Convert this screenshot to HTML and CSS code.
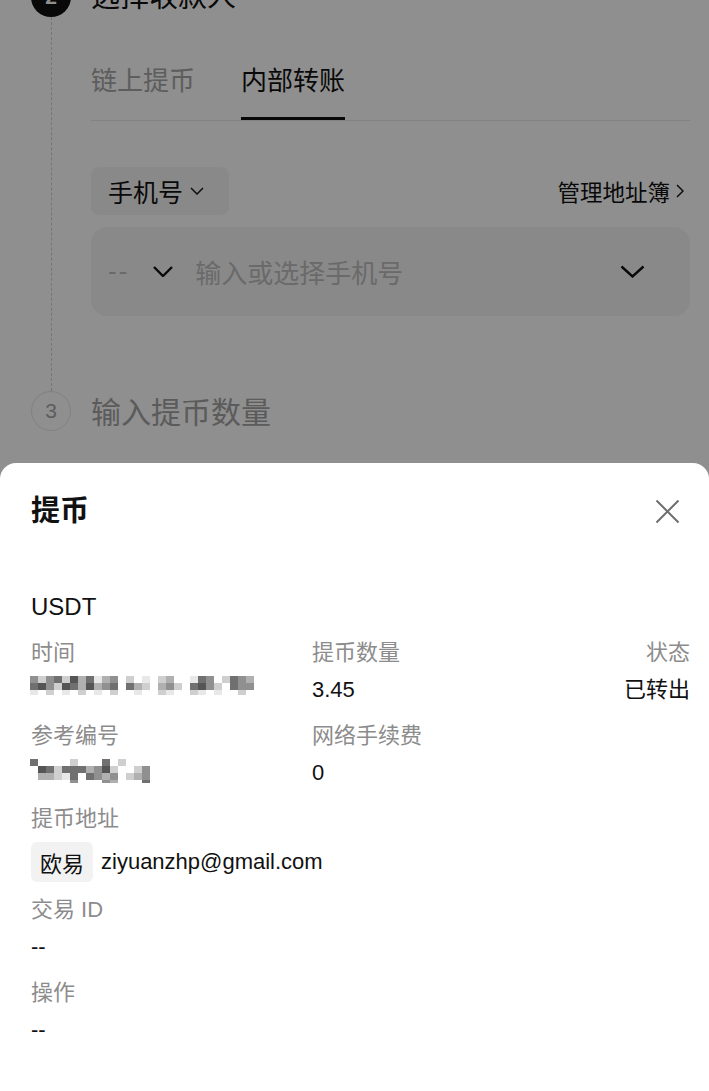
FILE: index.html
```html
<!DOCTYPE html>
<html lang="zh-CN">
<head>
<meta charset="utf-8">
<title>提币</title>
<link rel="stylesheet" href="styles.css">
</head>
<body>
<div class="page">
  <section class="step">
    <div class="step-head">
      <span class="step-num step-num-active">2</span>
      <span class="step-title">选择收款人</span>
    </div>
    <div class="step-body">
      <div class="tabs">
        <span class="tab">链上提币</span>
        <span class="tab tab-active">内部转账</span>
      </div>
      <div class="type-row">
        <span class="pill">手机号
          <svg class="ico-chev-sm" width="14" height="8" viewBox="0 0 14 8"><path d="M1 1 L7 7 L13 1" fill="none" stroke="#1a1a1a" stroke-width="1.5"/></svg>
        </span>
        <span class="book">管理地址簿
          <svg class="ico-chev-r" width="8" height="14" viewBox="0 0 8 14"><path d="M1 1 L7 7 L1 13" fill="none" stroke="#1a1a1a" stroke-width="1.5"/></svg>
        </span>
      </div>
      <div class="input">
        <span class="code">--</span>
        <svg class="ico-chev-code" width="20" height="11" viewBox="0 0 20 11"><path d="M1 1 L10 10 L19 1" fill="none" stroke="#111" stroke-width="2.4"/></svg>
        <span class="placeholder">输入或选择手机号</span>
        <svg class="ico-chev-end" width="25" height="13" viewBox="0 0 25 13"><path d="M1.5 1.5 L12.5 11.5 L23.5 1.5" fill="none" stroke="#111" stroke-width="2.4"/></svg>
      </div>
    </div>
  </section>
  <section class="step">
    <div class="step-head">
      <span class="step-num step-num-idle">3</span>
      <span class="step-title step-title-idle">输入提币数量</span>
    </div>
  </section>
</div>

<div class="overlay"></div>

<div class="sheet">
  <div class="sheet-head">
    <span class="sheet-title">提币</span>
    <svg class="ico-close" width="25" height="25" viewBox="0 0 25 25"><path d="M1.5 1.5 L23.5 23.5 M23.5 1.5 L1.5 23.5" fill="none" stroke="#6e6e6e" stroke-width="2"/></svg>
  </div>
  <div class="coin">USDT</div>
  <div class="grid">
    <div class="field">
      <div class="label">时间</div>
      <div class="value">
        <svg class="mosaic mosaic-time" width="224" height="19" viewBox="0 0 224 19">
          <rect x="0" y="0" width="8" height="7" fill="#909090"/><rect x="8" y="0" width="8" height="7" fill="#cfcfcf"/><rect x="16" y="0" width="8" height="7" fill="#909090"/><rect x="24" y="0" width="8" height="7" fill="#707070"/><rect x="32" y="0" width="8" height="7" fill="#cfcfcf"/><rect x="40" y="0" width="8" height="7" fill="#555"/><rect x="48" y="0" width="8" height="7" fill="#b0b0b0"/><rect x="56" y="0" width="8" height="7" fill="#707070"/><rect x="64" y="0" width="8" height="7" fill="#e8e8e8"/><rect x="72" y="0" width="8" height="7" fill="#b0b0b0"/><rect x="80" y="0" width="8" height="7" fill="#909090"/><rect x="96" y="0" width="8" height="7" fill="#cfcfcf"/><rect x="112" y="0" width="8" height="7" fill="#e8e8e8"/><rect x="128" y="0" width="8" height="7" fill="#cfcfcf"/><rect x="136" y="0" width="8" height="7" fill="#b0b0b0"/><rect x="160" y="0" width="8" height="7" fill="#e8e8e8"/><rect x="168" y="0" width="8" height="7" fill="#707070"/><rect x="176" y="0" width="8" height="7" fill="#909090"/><rect x="192" y="0" width="8" height="7" fill="#cfcfcf"/><rect x="200" y="0" width="8" height="7" fill="#707070"/><rect x="208" y="0" width="8" height="7" fill="#909090"/><rect x="216" y="0" width="8" height="7" fill="#b0b0b0"/>
          <rect x="0" y="7" width="8" height="7" fill="#707070"/><rect x="8" y="7" width="8" height="7" fill="#555"/><rect x="16" y="7" width="8" height="7" fill="#909090"/><rect x="24" y="7" width="8" height="7" fill="#cfcfcf"/><rect x="32" y="7" width="8" height="7" fill="#555"/><rect x="40" y="7" width="8" height="7" fill="#707070"/><rect x="48" y="7" width="8" height="7" fill="#b0b0b0"/><rect x="56" y="7" width="8" height="7" fill="#555"/><rect x="64" y="7" width="8" height="7" fill="#b0b0b0"/><rect x="72" y="7" width="8" height="7" fill="#909090"/><rect x="80" y="7" width="8" height="7" fill="#707070"/><rect x="96" y="7" width="8" height="7" fill="#707070"/><rect x="104" y="7" width="8" height="7" fill="#b0b0b0"/><rect x="112" y="7" width="8" height="7" fill="#cfcfcf"/><rect x="128" y="7" width="8" height="7" fill="#b0b0b0"/><rect x="136" y="7" width="8" height="7" fill="#909090"/><rect x="144" y="7" width="8" height="7" fill="#cfcfcf"/><rect x="160" y="7" width="8" height="7" fill="#707070"/><rect x="168" y="7" width="8" height="7" fill="#555"/><rect x="176" y="7" width="8" height="7" fill="#909090"/><rect x="184" y="7" width="8" height="7" fill="#cfcfcf"/><rect x="200" y="7" width="8" height="7" fill="#707070"/><rect x="208" y="7" width="8" height="7" fill="#909090"/><rect x="216" y="7" width="8" height="7" fill="#909090"/>
          <rect x="0" y="14" width="8" height="5" fill="#e8e8e8"/><rect x="16" y="14" width="8" height="5" fill="#cfcfcf"/><rect x="32" y="14" width="8" height="5" fill="#e8e8e8"/><rect x="48" y="14" width="8" height="5" fill="#cfcfcf"/><rect x="64" y="14" width="8" height="5" fill="#e8e8e8"/><rect x="80" y="14" width="8" height="5" fill="#cfcfcf"/><rect x="104" y="14" width="8" height="5" fill="#e8e8e8"/><rect x="128" y="14" width="8" height="5" fill="#cfcfcf"/><rect x="136" y="14" width="8" height="5" fill="#e8e8e8"/><rect x="160" y="14" width="8" height="5" fill="#cfcfcf"/><rect x="168" y="14" width="8" height="5" fill="#e8e8e8"/><rect x="184" y="14" width="8" height="5" fill="#e8e8e8"/><rect x="208" y="14" width="8" height="5" fill="#cfcfcf"/>
        </svg>
      </div>
    </div>
    <div class="field">
      <div class="label">提币数量</div>
      <div class="value">3.45</div>
    </div>
    <div class="field field-end">
      <div class="label">状态</div>
      <div class="value">已转出</div>
    </div>
    <div class="field">
      <div class="label">参考编号</div>
      <div class="value">
        <svg class="mosaic mosaic-ref" width="120" height="24" viewBox="0 0 120 24">
          <rect x="0" y="0" width="8" height="7" fill="#707070"/><rect x="40" y="0" width="8" height="7" fill="#cfcfcf"/><rect x="72" y="0" width="8" height="7" fill="#707070"/><rect x="88" y="0" width="8" height="7" fill="#cfcfcf"/>
          <rect x="8" y="7" width="8" height="7" fill="#555"/><rect x="16" y="7" width="8" height="7" fill="#707070"/><rect x="24" y="7" width="8" height="7" fill="#cfcfcf"/><rect x="32" y="7" width="8" height="7" fill="#707070"/><rect x="40" y="7" width="8" height="7" fill="#707070"/><rect x="48" y="7" width="8" height="7" fill="#707070"/><rect x="56" y="7" width="8" height="7" fill="#b0b0b0"/><rect x="64" y="7" width="8" height="7" fill="#909090"/><rect x="72" y="7" width="8" height="7" fill="#555"/><rect x="80" y="7" width="8" height="7" fill="#cfcfcf"/><rect x="104" y="7" width="8" height="7" fill="#cfcfcf"/><rect x="112" y="7" width="8" height="7" fill="#909090"/>
          <rect x="8" y="14" width="8" height="7" fill="#b0b0b0"/><rect x="16" y="14" width="8" height="7" fill="#b0b0b0"/><rect x="24" y="14" width="8" height="7" fill="#cfcfcf"/><rect x="32" y="14" width="8" height="7" fill="#e8e8e8"/><rect x="40" y="14" width="8" height="7" fill="#707070"/><rect x="56" y="14" width="8" height="7" fill="#707070"/><rect x="64" y="14" width="8" height="7" fill="#909090"/><rect x="72" y="14" width="8" height="7" fill="#b0b0b0"/><rect x="80" y="14" width="8" height="7" fill="#909090"/><rect x="96" y="14" width="8" height="7" fill="#cfcfcf"/><rect x="104" y="14" width="8" height="7" fill="#b0b0b0"/><rect x="112" y="14" width="8" height="7" fill="#909090"/>
          <rect x="40" y="21" width="8" height="3" fill="#909090"/><rect x="72" y="21" width="8" height="3" fill="#909090"/><rect x="80" y="21" width="8" height="3" fill="#b0b0b0"/><rect x="112" y="21" width="8" height="3" fill="#707070"/>
        </svg>
      </div>
    </div>
    <div class="field">
      <div class="label">网络手续费</div>
      <div class="value">0</div>
    </div>
  </div>
  <div class="field field-row">
    <div class="label">提币地址</div>
    <div class="address">
      <span class="tag">欧易</span>
      <span class="email">ziyuanzhp@gmail.com</span>
    </div>
  </div>
  <div class="field field-row">
    <div class="label">交易 ID</div>
    <div class="value">--</div>
  </div>
  <div class="field field-row">
    <div class="label">操作</div>
    <div class="value">--</div>
  </div>
</div>
</body>
</html>
```

FILE: styles.css
```css
* { box-sizing: border-box; }

html, body {
  margin: 0;
  padding: 0;
  background: #ffffff;
  height: 100%;
  overflow: hidden;
}

body {
  font-family: "Liberation Sans", "Noto Sans CJK SC", sans-serif;
  color: #111111;
}

.page {
  padding: 0 19px 0 31px;
  margin-top: -23px;
}

.step-head {
  display: flex;
  align-items: center;
  gap: 20px;
  height: 40px;
}

.step-num {
  width: 40px;
  height: 40px;
  border-radius: 50%;
  display: flex;
  align-items: center;
  justify-content: center;
  font-size: 21px;
  flex: none;
}

.step-num-active {
  background: #111111;
  color: #ffffff;
  font-weight: 700;
}

.step-num-idle {
  border: 1.5px solid #e6e6e6;
  color: #a6a6a6;
}

.step-title {
  font-size: 29px;
  line-height: 40px;
  color: #111111;
}

.step-title-idle {
  font-size: 30px;
  color: #a3a3a3;
  position: relative;
  top: 2px;
}

.step-body {
  margin-left: 20px;
  border-left: 1px dashed #d0d0d0;
  padding: 44px 0 75px 39px;
}

.tabs {
  display: flex;
  gap: 46px;
  border-bottom: 1px solid #e8e8e8;
}

.tab {
  font-size: 26px;
  line-height: 40px;
  padding-bottom: 19px;
  color: #a6a6a6;
}

.tab-active {
  color: #111111;
  padding-bottom: 16px;
  border-bottom: 3px solid #111111;
}

.type-row {
  margin-top: 46px;
  display: flex;
  justify-content: space-between;
  align-items: center;
}

.pill {
  display: flex;
  align-items: center;
  gap: 7px;
  height: 48px;
  padding: 0 25px 0 17px;
  background: #f5f5f5;
  border-radius: 8px;
  font-size: 25px;
  color: #111111;
}

.book {
  display: flex;
  align-items: center;
  gap: 6px;
  font-size: 22.5px;
  color: #111111;
  margin-right: 6px;
}

.input {
  margin-top: 12px;
  height: 89px;
  background: #f5f5f5;
  border-radius: 16px;
  display: flex;
  align-items: center;
  padding: 0 45px 0 17px;
}

.code {
  font-size: 26px;
  color: #bdbdbd;
  letter-spacing: 2px;
}

.ico-chev-code {
  margin-left: 24px;
}

.placeholder {
  margin-left: 22px;
  font-size: 26px;
  color: #bdbdbd;
  flex: 1;
}

.overlay {
  position: fixed;
  inset: 0;
  background: rgba(0, 0, 0, 0.44);
}

.sheet {
  position: fixed;
  left: 0;
  right: 0;
  top: 463px;
  bottom: 0;
  background: #ffffff;
  border-radius: 16px 16px 0 0;
  padding: 0 19px 0 31px;
}

.sheet-head {
  padding-top: 28px;
  height: 68px;
  display: flex;
  justify-content: space-between;
  align-items: center;
}

.sheet-title {
  font-size: 29px;
  font-weight: 700;
  line-height: 40px;
}

.ico-close {
  margin-right: 10px;
}

.coin {
  margin-top: 60px;
  font-size: 24px;
  line-height: 32px;
  color: #111111;
}

.grid {
  margin-top: 16px;
  display: grid;
  grid-template-columns: 281px 1fr auto;
  row-gap: 18px;
}

.field-end {
  text-align: right;
}

.field-row {
  margin-top: 18px;
}

.label {
  font-size: 22px;
  line-height: 28px;
  color: #8c8c8c;
}

.value {
  margin-top: 9px;
  font-size: 22px;
  line-height: 28px;
  height: 28px;
  color: #111111;
}

.mosaic {
  display: block;
  margin-left: -1px;
}

.mosaic-time {
  margin-top: 7px;
}

.mosaic-ref {
  margin-top: 4px;
}

.address {
  margin-top: 9px;
  display: flex;
  align-items: center;
  gap: 8px;
  height: 40px;
}

.tag {
  height: 40px;
  padding: 0 9px;
  background: #f2f2f2;
  border-radius: 6px;
  display: flex;
  align-items: center;
  font-size: 22px;
  color: #111111;
}

.email {
  font-size: 22px;
  color: #111111;
}

.field-row + .field-row {
  margin-top: 14px;
}

.field-row + .field-row + .field-row {
  margin-top: 18px;
}
```
